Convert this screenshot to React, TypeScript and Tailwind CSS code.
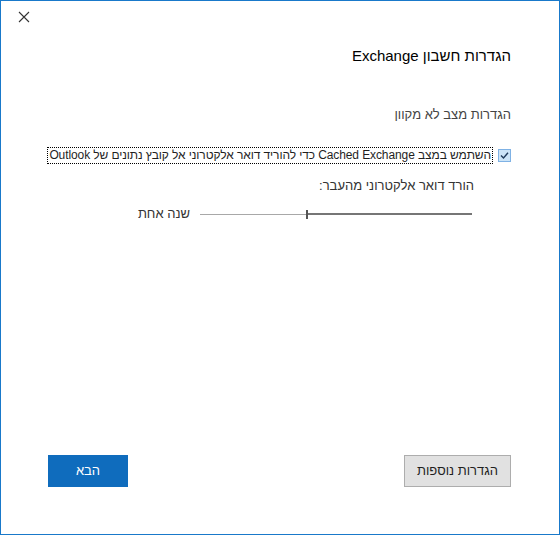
import React from 'react';

const font = { fontFamily: '"Liberation Sans", "DejaVu Sans", sans-serif' };

function CloseIcon() {
  return (
    <svg width="12" height="12" viewBox="0 0 12 12" className="block">
      <path d="M1 1 L11 11 M11 1 L1 11" stroke="#333" strokeWidth="1.1" fill="none" />
    </svg>
  );
}

function CheckMark() {
  return (
    <svg width="11" height="11" viewBox="0 0 11 11" className="block">
      <path d="M2 5.5 L4.5 8 L9 2.8" stroke="#1f3a5a" strokeWidth="1.4" fill="none" />
    </svg>
  );
}

export default function App() {
  return (
    <div
      dir="rtl"
      style={font}
      className="w-[560px] h-[535px] border border-[#1979ca] bg-white flex flex-col text-[#1f1f1f]"
    >
      <div className="flex justify-end pt-[10px] pl-[17px]">
        <button aria-label="סגור" className="p-0">
          <CloseIcon />
        </button>
      </div>

      <div className="pr-[48px] flex flex-col">
        <h1 className="mt-[23px] text-[15px] leading-[20px] font-normal text-black">הגדרות חשבון Exchange</h1>

        <p className="mt-[40px] text-[13px] leading-[18px] text-[#444]">הגדרות מצב לא מקוון</p>

        <label className="mt-[23px] flex items-center gap-[5px] h-[17px]">
          <span className="w-[13px] h-[13px] bg-[#cce4f7] border border-[#7fb2e5] flex items-center justify-center">
            <CheckMark />
          </span>
          <span className="border border-dotted border-black px-[1px] text-[12px] leading-[15px] tracking-[-0.1px] whitespace-nowrap">
            השתמש במצב Cached Exchange כדי להוריד דואר אלקטרוני אל קובץ נתונים של Outlook
          </span>
        </label>

        <p className="mt-[13px] mr-[37px] text-[13px] leading-[18px] text-[#333]">הורד דואר אלקטרוני מהעבר:</p>

        <div className="mt-[10px] mr-[39px] flex items-center gap-[10px] h-[18px]">
          <div className="w-[272px] h-[10px] flex items-center">
            <div className="w-[164px] h-[2px] bg-[#767676]" />
            <div className="w-[2px] h-[9px] bg-[#555]" />
            <div className="flex-1 h-[1px] bg-[#a8a8a8]" />
          </div>
          <span className="text-[13px] leading-[18px] text-[#333]">שנה אחת</span>
        </div>
      </div>

      <div className="mt-auto pb-[47px] pr-[48px] pl-[47px] flex justify-between">
        <button className="w-[107px] h-[32px] bg-[#e1e1e1] border border-[#adadad] text-[13px] text-[#1f1f1f]">
          הגדרות נוספות
        </button>
        <button className="w-[80px] h-[32px] bg-[#0f6cbd] text-[13px] text-white">הבא</button>
      </div>
    </div>
  );
}
